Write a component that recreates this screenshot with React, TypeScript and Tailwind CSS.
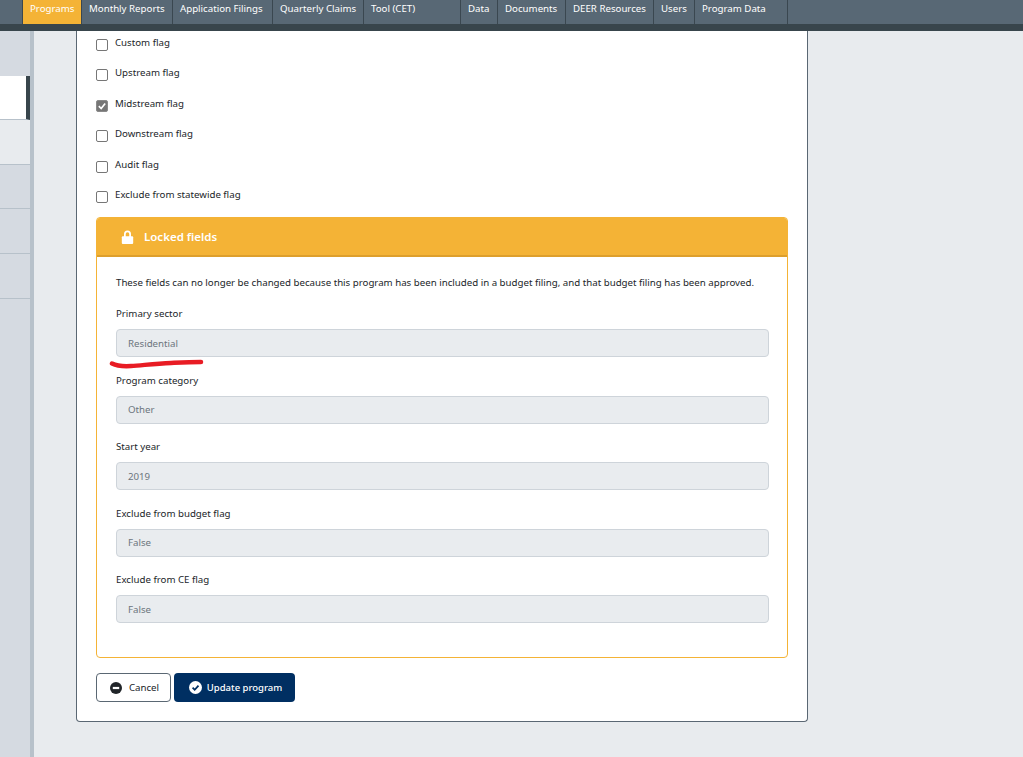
const navItems = [
  { label: "Programs", width: "w-[59px]", active: true },
  { label: "Monthly Reports", width: "w-[91px]" },
  { label: "Application Filings", width: "w-[100px]" },
  { label: "Quarterly Claims", width: "w-[91px]" },
  { label: "Tool (CET)", width: "w-[97px]" },
  { label: "Data", width: "w-[37px]" },
  { label: "Documents", width: "w-[68px]" },
  { label: "DEER Resources", width: "w-[88px]" },
  { label: "Users", width: "w-[41px]" },
  { label: "Program Data", width: "w-[94px] border-r" },
];

const flags = [
  { label: "Custom flag" },
  { label: "Upstream flag" },
  { label: "Midstream flag", checked: true },
  { label: "Downstream flag" },
  { label: "Audit flag" },
  { label: "Exclude from statewide flag" },
];

const lockedFields = [
  { label: "Primary sector", value: "Residential" },
  { label: "Program category", value: "Other" },
  { label: "Start year", value: "2019" },
  { label: "Exclude from budget flag", value: "False" },
  { label: "Exclude from CE flag", value: "False" },
];

function FlagRow({ label, checked }: { label: string; checked?: boolean }) {
  return (
    <div className="flex h-[30.4px] items-start gap-[7px] pl-[19px]">
      <span
        className={`mt-[8px] flex h-[12px] w-[12px] items-center justify-center rounded-[2px] border ${
          checked ? "border-[#8a8a8a] bg-[#767676]" : "border-[#767676] bg-white"
        }`}
      >
        {checked && (
          <svg viewBox="0 0 12 12" className="h-[10px] w-[10px]" fill="none" stroke="#fff" strokeWidth="2">
            <path d="M2.2 6.2 5 9l4.8-6" />
          </svg>
        )}
      </span>
      <span className="mt-[4px] text-[9.7px] leading-[16px] text-[#212529]">{label}</span>
    </div>
  );
}

function LockedField({ label, value }: { label: string; value: string }) {
  return (
    <div className="mb-[15.4px]">
      <div className="mb-[7px] text-[9.7px] leading-[16px] text-[#212529]">{label}</div>
      <div className="flex h-[28px] items-center rounded-[4px] border border-[#ced4da] bg-[#e9ecef] px-[11px] pt-[2px] text-[9.7px] text-[#6c757d]">
        {value}
      </div>
    </div>
  );
}

export default function App() {
  return (
    <div className="flex h-[757px] w-[1023px] flex-col overflow-hidden bg-[#e8ebee] font-['Noto_Sans',sans-serif]">
      {/* top nav */}
      <div className="flex h-[24px] shrink-0 bg-[#586875] pl-[22px]">
        {navItems.map((item) => (
          <div
            key={item.label}
            className={`h-full whitespace-nowrap border-l border-[#3a4750] pl-[7px] text-[9.7px] leading-[17px] text-white ${item.width} ${
              item.active ? "bg-[#f4b336]" : ""
            }`}
          >
            {item.label}
          </div>
        ))}
      </div>
      <div className="h-[7px] shrink-0 bg-[#38454c]" />

      <div className="flex min-h-0 flex-1">
        {/* sidebar */}
        <div className="flex w-[34px] shrink-0 flex-col border-r-4 border-[#b7c1ca] bg-[#d5dae1] pt-[45px]">
          <div className="h-[44px] border-r-[4px] border-b border-[#38454c] border-b-[#b7c1ca] bg-white" />
          <div className="h-[45px] border-b border-[#b7c1ca] bg-[#e8ebee]" />
          <div className="h-[44px] border-b border-[#b7c1ca]" />
          <div className="h-[45px] border-b border-[#b7c1ca]" />
          <div className="h-[45px] border-b border-[#b7c1ca]" />
        </div>

        {/* form card */}
        <div className="ml-[42px] h-[691px] w-[732px] shrink-0 rounded-b-[4px] border-x border-b border-[#5a6773] bg-white">
          <div>
            {flags.map((flag) => (
              <FlagRow key={flag.label} label={flag.label} checked={flag.checked} />
            ))}
          </div>

          <div className="relative ml-[19px] mt-[4px] h-[441px] w-[692px] rounded-[4px] border border-[#f4b336]">
            <div className="flex h-[39px] items-center gap-[10px] rounded-t-[3px] border-b-2 border-[#dd9f2c] bg-[#f4b336] pl-[24px] text-[11.5px] font-semibold text-white">
              <svg viewBox="0 0 14 16" className="h-[14px] w-[13px]" fill="#fff">
                <path d="M3 8V4.500a4 4 0 0 1 8 0V8H9V4.500a2 2 0 0 0-4 0V8z" />
                <rect x="0.500" y="7" width="13" height="9" rx="1.200" />
              </svg>
              Locked fields
            </div>
            <div className="pl-[19px] pr-[18px] pt-[18px]">
              <p className="mb-[15px] text-[9.7px] leading-[16px] text-[#212529]">
                These fields can no longer be changed because this program has been included in a budget filing, and that budget filing has been approved.
              </p>
              {lockedFields.map((field) => (
                <LockedField key={field.label} label={field.label} value={field.value} />
              ))}
            </div>
            {/* red marker scribble */}
            <svg className="absolute left-[12px] top-[139px] h-[14px] w-[96px]" viewBox="0 0 96 14" fill="none">
              <path d="M3 6.500C8 9 14 9.500 22 9c12-.8 24-2.300 40-3 8-.4 18-1 30-1" stroke="#e81c24" strokeWidth="4.500" strokeLinecap="round" />
            </svg>
          </div>

          <div className="ml-[19px] mt-[15px] flex gap-[3px]">
            <button className="flex h-[29px] w-[75px] items-center justify-center gap-[7px] rounded-[4px] border border-[#5a6773] bg-white pl-[2px] text-[9.7px] text-[#212529]">
              <svg viewBox="0 0 12 12" className="h-[12px] w-[12px]">
                <circle cx="6" cy="6" r="6" fill="#212529" />
                <rect x="2.800" y="4.900" width="6.400" height="2.200" fill="#fff" />
              </svg>
              Cancel
            </button>
            <button className="flex h-[29px] w-[121px] items-center justify-center gap-[5px] rounded-[4px] bg-[#002f62] pl-[2px] text-[9.5px] font-medium text-white">
              <svg viewBox="0 0 13 13" className="h-[13px] w-[13px]">
                <circle cx="6.500" cy="6.500" r="6.500" fill="#fff" />
                <path d="M3.600 6.700 5.700 8.800 9.500 4.700" fill="none" stroke="#002f62" strokeWidth="1.800" />
              </svg>
              Update program
            </button>
          </div>
        </div>
      </div>
    </div>
  );
}
